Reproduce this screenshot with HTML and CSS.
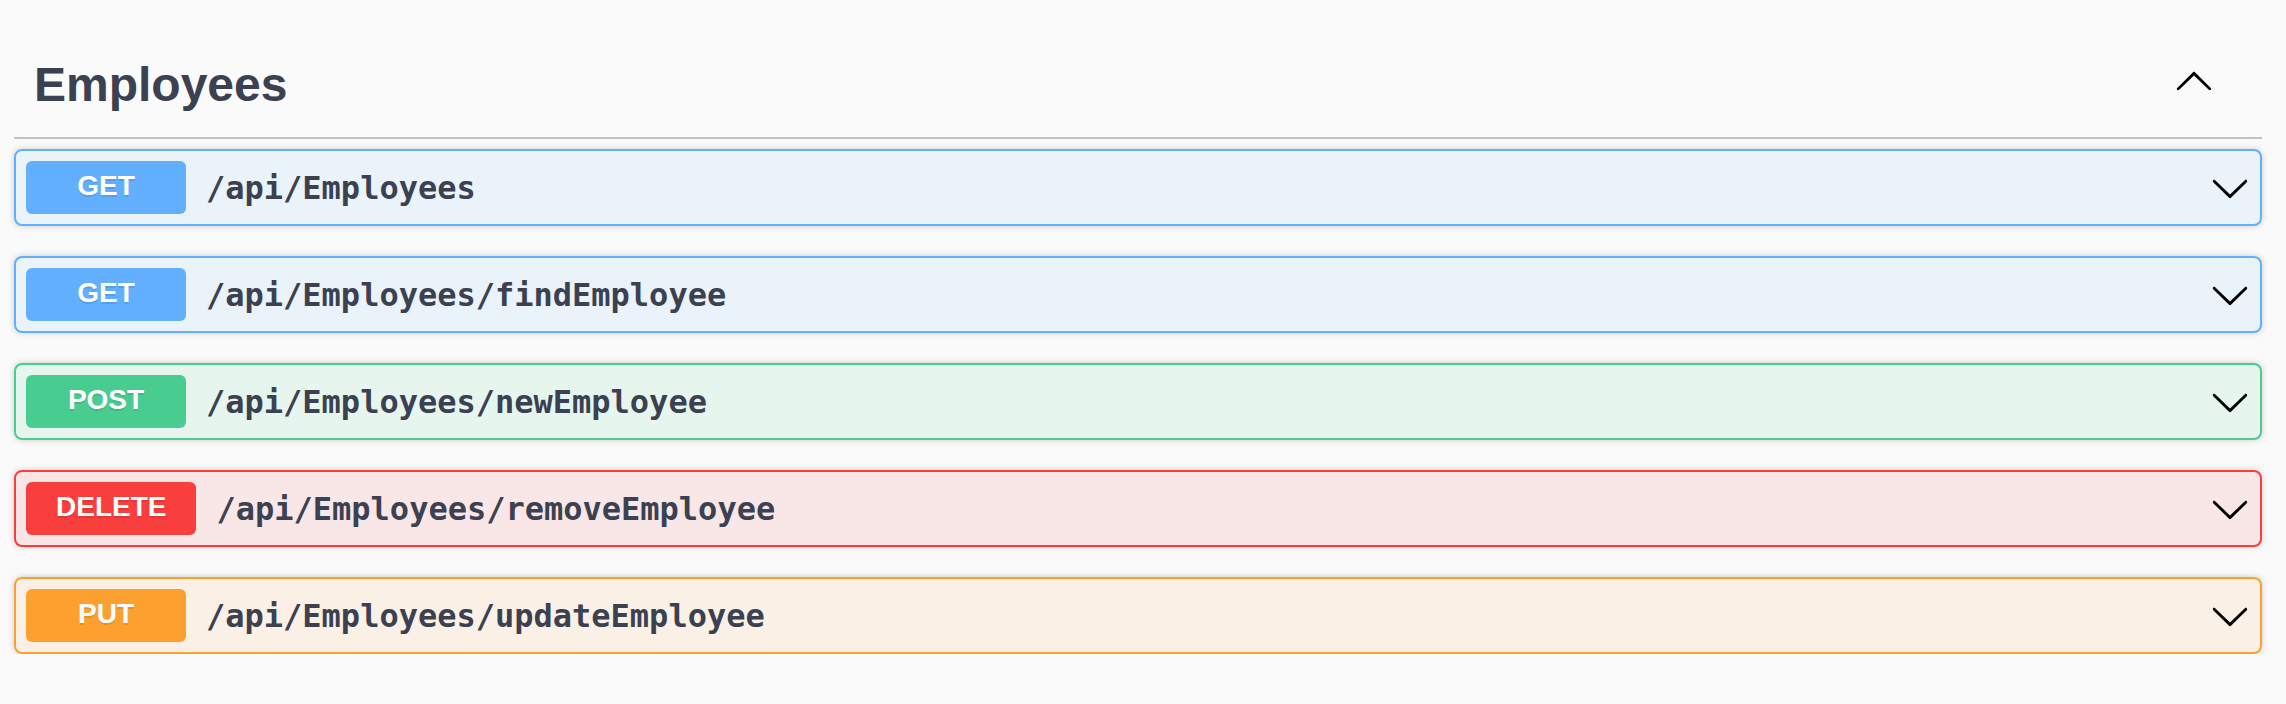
FILE: index.html
```html
<!DOCTYPE html>
<html lang="en">
<head>
<meta charset="utf-8">
<title>Employees</title>
<link rel="stylesheet" href="styles.css">
</head>
<body>
<div class="wrapper">
  <section class="tag-section">
    <h3 class="opblock-tag">
      <span class="tag-name">Employees</span>
      <button class="expand-operation" aria-label="Collapse">
        <svg width="40" height="40" viewBox="0 0 20 20"><path d="M17.418 14.908c.272.268.709.268.979 0s.271-.701 0-.969l-7.908-7.83c-.27-.268-.707-.268-.979 0l-7.908 7.83c-.27.268-.27.701 0 .969.271.268.709.268.979 0L10 7.767l7.418 7.141z"/></svg>
      </button>
    </h3>
    <div class="operations">
      <div class="opblock opblock-get">
        <div class="opblock-summary">
          <span class="method">GET</span>
          <span class="path">/api/Employees</span>
          <svg class="arrow" width="40" height="40" viewBox="0 0 20 20"><path d="M17.418 6.109c.272-.268.709-.268.979 0s.271.701 0 .969l-7.908 7.83c-.27.268-.707.268-.979 0l-7.908-7.830c-.27-.268-.27-.701 0-.969.271-.268.709-.268.979 0L10 13.25l7.418-7.141z"/></svg>
        </div>
      </div>
      <div class="opblock opblock-get">
        <div class="opblock-summary">
          <span class="method">GET</span>
          <span class="path">/api/Employees/findEmployee</span>
          <svg class="arrow" width="40" height="40" viewBox="0 0 20 20"><path d="M17.418 6.109c.272-.268.709-.268.979 0s.271.701 0 .969l-7.908 7.83c-.27.268-.707.268-.979 0l-7.908-7.83c-.27-.268-.27-.701 0-.969.271-.268.709-.268.979 0L10 13.25l7.418-7.141z"/></svg>
        </div>
      </div>
      <div class="opblock opblock-post">
        <div class="opblock-summary">
          <span class="method">POST</span>
          <span class="path">/api/Employees/newEmployee</span>
          <svg class="arrow" width="40" height="40" viewBox="0 0 20 20"><path d="M17.418 6.109c.272-.268.709-.268.979 0s.271.701 0 .969l-7.908 7.83c-.27.268-.707.268-.979 0l-7.908-7.83c-.27-.268-.27-.701 0-.969.271-.268.709-.268.979 0L10 13.25l7.418-7.141z"/></svg>
        </div>
      </div>
      <div class="opblock opblock-delete">
        <div class="opblock-summary">
          <span class="method">DELETE</span>
          <span class="path">/api/Employees/removeEmployee</span>
          <svg class="arrow" width="40" height="40" viewBox="0 0 20 20"><path d="M17.418 6.109c.272-.268.709-.268.979 0s.271.701 0 .969l-7.908 7.83c-.27.268-.707.268-.979 0l-7.908-7.83c-.27-.268-.27-.701 0-.969.271-.268.709-.268.979 0L10 13.25l7.418-7.141z"/></svg>
        </div>
      </div>
      <div class="opblock opblock-put">
        <div class="opblock-summary">
          <span class="method">PUT</span>
          <span class="path">/api/Employees/updateEmployee</span>
          <svg class="arrow" width="40" height="40" viewBox="0 0 20 20"><path d="M17.418 6.109c.272-.268.709-.268.979 0s.271.701 0 .969l-7.908 7.83c-.27.268-.707.268-.979 0l-7.908-7.83c-.27-.268-.27-.701 0-.969.271-.268.709-.268.979 0L10 13.25l7.418-7.141z"/></svg>
        </div>
      </div>
    </div>
  </section>
</div>
</body>
</html>
```
FILE: styles.css
```css
html, body {
  margin: 0;
  padding: 0;
  background: #fafafa;
}

body {
  font-family: "Liberation Sans", Arial, sans-serif;
  color: #3b4151;
}

.wrapper {
  padding: 32px 24px 0 14px;
}

.opblock-tag {
  display: flex;
  align-items: center;
  min-height: 65px;
  margin: 0 0 10px;
  padding: 20px 48px 20px 20px;
  border-bottom: 2px solid rgba(59, 65, 81, 0.3);
  font-size: 48px;
  font-weight: 700;
  color: #3b4151;
}

.tag-name {
  flex: 1;
  line-height: normal;
}

.expand-operation {
  align-self: flex-start;
  margin-top: 8px;
  padding: 0;
  border: none;
  background: none;
  width: 40px;
  height: 40px;
  display: flex;
}

.expand-operation svg {
  fill: #000;
}

.operations {
  display: flex;
  flex-direction: column;
  gap: 30px;
}

.opblock {
  border: 2px solid #000;
  border-radius: 8px;
  box-shadow: 0 0 6px rgba(0, 0, 0, 0.19);
}

.opblock-summary {
  display: flex;
  align-items: center;
  padding: 10px;
}

.method {
  min-width: 160px;
  box-sizing: border-box;
  padding: 10px 30px 14px;
  border-radius: 6px;
  font-family: "Liberation Sans", Arial, sans-serif;
  font-size: 28px;
  line-height: 29px;
  font-weight: 700;
  color: #fff;
  text-align: center;
  text-shadow: 0 2px 0 rgba(0, 0, 0, 0.1);
}

.path {
  flex: 1;
  padding: 0 20px;
  font-family: "DejaVu Sans Mono", monospace;
  font-size: 32px;
  font-weight: 700;
  color: #3b4151;
}

.arrow {
  flex: none;
  fill: #000;
}

.opblock-get {
  border-color: #61affe;
  background: rgba(97, 175, 254, 0.1);
}
.opblock-get .method { background: #61affe; }

.opblock-post {
  border-color: #49cc90;
  background: rgba(73, 204, 144, 0.1);
}
.opblock-post .method { background: #49cc90; }

.opblock-delete {
  border-color: #f93e3e;
  background: rgba(249, 62, 62, 0.1);
}
.opblock-delete .method { background: #f93e3e; }

.opblock-put {
  border-color: #fca130;
  background: rgba(252, 161, 48, 0.1);
}
.opblock-put .method { background: #fca130; }
```
